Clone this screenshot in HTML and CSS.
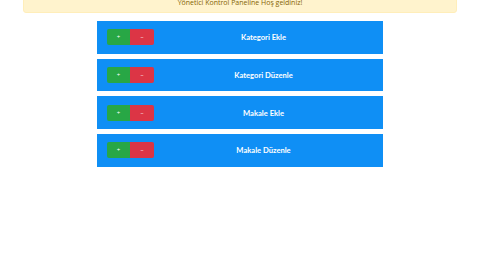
FILE: index.html
```html
<!DOCTYPE html>
<html lang="tr">
<head>
<meta charset="utf-8">
<title>Yönetici Paneli</title>
<link rel="stylesheet" href="styles.css">
</head>
<body>
<div class="page">
  <div class="alert">Yönetici Kontrol Paneline Hoş geldiniz!</div>
  <div class="list">
    <div class="item">
      <div class="btns"><span class="btn add">+</span><span class="btn del">–</span></div>
      <div class="label">Kategori Ekle</div>
    </div>
    <div class="item">
      <div class="btns"><span class="btn add">+</span><span class="btn del">–</span></div>
      <div class="label">Kategori Düzenle</div>
    </div>
    <div class="item">
      <div class="btns"><span class="btn add">+</span><span class="btn del">–</span></div>
      <div class="label">Makale Ekle</div>
    </div>
    <div class="item">
      <div class="btns"><span class="btn add">+</span><span class="btn del">–</span></div>
      <div class="label">Makale Düzenle</div>
    </div>
  </div>
</div>
</body>
</html>
```

FILE: styles.css
```css
html, body {
  margin: 0;
  padding: 0;
  background: #ffffff;
}
body {
  font-family: "Open Sans", "Noto Sans", "DejaVu Sans", sans-serif;
}
.page {
  display: flex;
  flex-direction: column;
  align-items: center;
  margin-top: -10px;
}
.alert {
  width: 434px;
  height: 23px;
  box-sizing: border-box;
  background: #fff3cd;
  border: 1px solid #ffeeba;
  border-radius: 3px;
  color: #856404;
  font-size: 7px;
  text-align: center;
  padding-top: 8px;
  line-height: 8px;
}
.list {
  display: flex;
  flex-direction: column;
  gap: 5.2px;
  margin-top: 8px;
  width: 286px;
}
.item {
  height: 32.5px;
  background: #0f8ff5;
  display: flex;
  align-items: center;
  padding: 0 10px;
  box-sizing: border-box;
}
.btns {
  display: flex;
}
.btn {
  height: 16px;
  display: flex;
  align-items: center;
  justify-content: center;
  color: #ffffff;
  font-size: 6px;
  line-height: 1;
}
.add {
  background: #28a745;
  border-radius: 2px 0 0 2px;
  width: 23px;
}
.del {
  background: #dc3545;
  border-radius: 0 2px 2px 0;
  width: 24px;
}
.label {
  flex: 1;
  text-align: center;
  color: #ffffff;
  font-family: Lato, "Open Sans", sans-serif;
  font-weight: 700;
  font-size: 7.6px;
}
```
